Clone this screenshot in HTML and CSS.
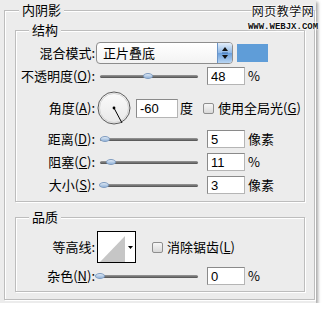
FILE: index.html
```html
<!DOCTYPE html>
<html lang="zh-CN">
<head>
  <meta charset="UTF-8">
  <title>内阴影</title>
  <link rel="stylesheet" href="styles.css">
</head>
<body>
  <div class="panel">
    <div class="mark">
      <div class="mark-cn">网页教学网</div>
      <div class="mark-en">WWW.WEBJX.COM</div>
    </div>

    <fieldset class="group outer">
      <legend>内阴影</legend>

      <fieldset class="group inner">
        <legend>结构</legend>

        <div class="row row-blend">
          <span class="lbl">混合模式:</span>
          <div class="select">
            <span class="select-text">正片叠底</span>
            <span class="spin">
              <svg width="8" height="14" viewBox="0 0 8 14"><path d="M4 1 L7 5 L1 5 Z M1 9 L7 9 L4 13 Z" fill="#111"/><path d="M1 7 H7" stroke="#3b6fb0" stroke-width="1"/></svg>
            </span>
          </div>
          <span class="swatch"></span>
        </div>

        <div class="row row-opacity">
          <span class="lbl">不透明度(<u>O</u>):</span>
          <div class="slider"><span class="thumb" style="left:43px"></span></div>
          <input class="num" type="text" value="48">
          <span class="unit">%</span>
        </div>

        <div class="row row-angle">
          <span class="lbl">角度(<u>A</u>):</span>
          <svg class="dial" width="34" height="34" viewBox="0 0 34 34">
            <defs>
              <linearGradient id="dialFill" x1="0" y1="0" x2="0" y2="1">
                <stop offset="0" stop-color="#fbfbfb"/>
                <stop offset="1" stop-color="#e8e8e8"/>
              </linearGradient>
            </defs>
            <circle cx="17" cy="17" r="16" fill="url(#dialFill)" stroke="#5a5a5a" stroke-width="1"/>
            <circle cx="17" cy="17" r="14.5" fill="none" stroke="#d4d4d4" stroke-width="1"/>
            <line x1="17" y1="17" x2="25" y2="32" stroke="#000" stroke-width="1"/>
            <circle cx="17" cy="17" r="1.4" fill="#000"/>
          </svg>
          <input class="num num-angle" type="text" value="-60">
          <span class="unit unit-deg">度</span>
          <span class="check"></span>
          <span class="check-text">使用全局光(<u>G</u>)</span>
        </div>

        <div class="row">
          <span class="lbl">距离(<u>D</u>):</span>
          <div class="slider"><span class="thumb" style="left:0px"></span></div>
          <input class="num" type="text" value="5">
          <span class="unit">像素</span>
        </div>

        <div class="row">
          <span class="lbl">阻塞(<u>C</u>):</span>
          <div class="slider"><span class="thumb" style="left:6px"></span></div>
          <input class="num" type="text" value="11">
          <span class="unit">%</span>
        </div>

        <div class="row">
          <span class="lbl">大小(<u>S</u>):</span>
          <div class="slider"><span class="thumb" style="left:-1px"></span></div>
          <input class="num" type="text" value="3">
          <span class="unit">像素</span>
        </div>
      </fieldset>

      <fieldset class="group inner quality">
        <legend>品质</legend>

        <div class="row row-contour">
          <span class="lbl">等高线:</span>
          <div class="contour">
            <svg width="37" height="30" viewBox="0 0 37 30">
              <polygon points="2,30 27,4 27,30" fill="#c6c6c6"/>
              <polygon points="30,14 35,14 32.5,17" fill="#000"/>
            </svg>
          </div>
          <span class="check check-aa"></span>
          <span class="check-text">消除锯齿(<u>L</u>)</span>
        </div>

        <div class="row row-noise">
          <span class="lbl">杂色(<u>N</u>):</span>
          <div class="slider"><span class="thumb" style="left:-5px"></span></div>
          <input class="num" type="text" value="0">
          <span class="unit">%</span>
        </div>
      </fieldset>
    </fieldset>
  </div>
</body>
</html>
```

FILE: styles.css
```css
body {
  margin: 0;
  background: #fff;
  font-family: "Noto Sans CJK SC", sans-serif;
  font-size: 13px;
  color: #000;
}

.panel {
  position: relative;
  width: 316px;
  height: 303px;
  padding-top: 2px;
  box-sizing: border-box;
  background: #ececec;
  box-shadow: 2px 2px 3px rgba(0, 0, 0, 0.35);
}

/* watermark in the top right corner */
.mark {
  position: absolute;
  left: 246px;
  top: 3px;
  width: 74px;
  text-align: center;
  color: #111;
  text-shadow: 0 0 2px #fff, 0 0 2px #fff, 0 0 3px #fff;
}

.mark-cn {
  font-size: 12px;
  line-height: 16px;
  letter-spacing: 0.5px;
}

.mark-en {
  margin-top: 4px;
  font-family: "Liberation Mono", monospace;
  font-size: 9px;
  font-weight: bold;
  line-height: 9px;
}

/* etched group boxes */
.group {
  margin: 0;
  min-width: 0;
  border: 1px solid #bdbdbd;
  box-shadow: inset 1px 1px 0 #fff, 1px 1px 0 #fff;
  box-sizing: border-box;
}

.group legend {
  padding: 0 3px;
  line-height: 16px;
  background: #ececec;
}

.outer {
  margin-left: 4px;
  width: 311px;
  padding: 4px 8px 7px 10px;
}

.outer > legend {
  margin-left: 4px;
}

.inner {
  width: 290px;
  padding: 4px 0 7px;
}

.inner > legend {
  margin-left: 13px;
}

.quality {
  margin-top: 7px;
  padding: 6px 0 6px;
}

/* rows */
.row {
  display: flex;
  align-items: center;
  height: 18px;
  margin-top: 5px;
}

.row-blend {
  height: 22px;
  margin-top: 0;
}

.row-opacity {
  margin-top: 3px;
}

.row-angle {
  height: 34px;
  margin-top: 6px;
}

.row-contour {
  height: 32px;
  margin-top: 0;
}

.row-noise {
  margin-top: 4px;
}

.lbl {
  flex: none;
  width: 79px;
  text-align: right;
  line-height: 18px;
  white-space: nowrap;
}

u {
  text-decoration: underline;
  text-underline-offset: 1px;
}

/* blend mode select */
.select {
  display: flex;
  align-items: stretch;
  flex: none;
  width: 137px;
  height: 22px;
  margin-left: 1px;
  box-sizing: border-box;
  border: 1px solid #8d8d8d;
  border-radius: 4px;
  background: linear-gradient(#fff, #f3f3f3);
}

.select-text {
  flex: 1;
  padding-left: 6px;
  line-height: 20px;
}

.spin {
  display: flex;
  align-items: center;
  justify-content: center;
  width: 14px;
  border-left: 1px solid #6b95c8;
  border-radius: 0 3px 3px 0;
  background: linear-gradient(#e3eefa, #8fb8e6 50%, #6a9fdc 51%, #b9d5f2);
}

.swatch {
  flex: none;
  width: 31px;
  height: 18px;
  margin-left: 4px;
  background: #5f9dd8;
}

/* sliders */
.slider {
  position: relative;
  flex: none;
  width: 98px;
  height: 10px;
  margin: 0 9px 0 5px;
}

.slider::before {
  content: "";
  position: absolute;
  left: 0;
  right: 0;
  top: 4px;
  height: 3px;
  border-radius: 2px;
  background: linear-gradient(#9a9a9a, #4f4f4f);
}

.thumb {
  position: absolute;
  top: 2px;
  width: 10px;
  height: 6px;
  box-sizing: border-box;
  border: 1px solid #7f9cc0;
  border-radius: 50%;
  background: linear-gradient(#dfeaf6, #93b3d8);
}

/* number fields */
.num {
  flex: none;
  width: 38px;
  height: 18px;
  margin: 0;
  padding: 0 3px;
  box-sizing: border-box;
  border: 1px solid #8a8a8a;
  border-right-color: #b5b5b5;
  border-bottom-color: #b5b5b5;
  background: #fff;
  font-family: "Liberation Sans", sans-serif;
  font-size: 13px;
  color: #000;
}

.num-angle {
  width: 42px;
  height: 19px;
  margin-left: 5px;
}

.unit {
  margin-left: 3px;
  line-height: 18px;
}

.unit-deg {
  margin-left: 2px;
}

.dial {
  flex: none;
  margin-left: 2px;
}

/* checkboxes */
.check {
  flex: none;
  width: 11px;
  height: 11px;
  margin-left: 10px;
  box-sizing: border-box;
  border: 1px solid #8e8e8e;
  border-radius: 2px;
  background: linear-gradient(#f6f6f6, #d9d9d9);
}

.check-aa {
  margin-left: 16px;
}

.check-text {
  margin-left: 4px;
  line-height: 18px;
  white-space: nowrap;
}

/* contour picker */
.contour {
  flex: none;
  width: 39px;
  height: 32px;
  margin-left: 2px;
  box-sizing: border-box;
  border: 1px solid #000;
  background: #fff;
}

.contour svg {
  display: block;
}
```
